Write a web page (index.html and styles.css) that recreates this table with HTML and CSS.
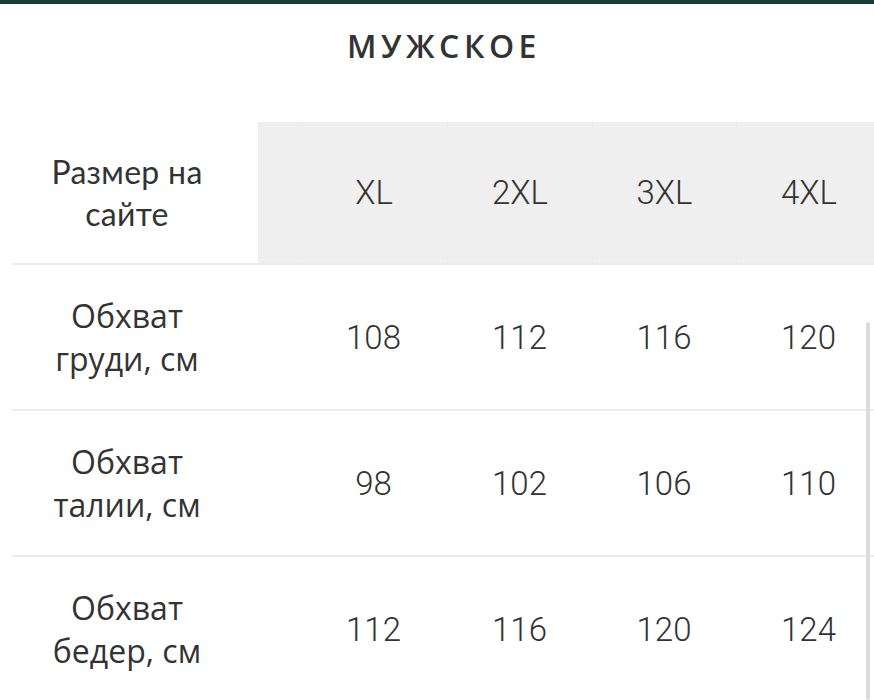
FILE: index.html
```html
<!DOCTYPE html>
<html lang="ru">
<head>
<meta charset="utf-8">
<title>Мужское</title>
<link rel="stylesheet" href="styles.css">
</head>
<body>
<div class="topbar"></div>
<h1 class="title">МУЖСКОЕ</h1>
<div class="table">
  <div class="row head">
    <div class="label">Размер на<br>сайте</div>
    <div class="spacer"></div>
    <div class="size">XL</div>
    <div class="size">2XL</div>
    <div class="size">3XL</div>
    <div class="size">4XL</div>
  </div>
  <div class="row">
    <div class="label">Обхват<br>груди, см</div>
    <div class="spacer"></div>
    <div class="num">108</div>
    <div class="num">112</div>
    <div class="num">116</div>
    <div class="num">120</div>
  </div>
  <div class="row">
    <div class="label">Обхват<br>талии, см</div>
    <div class="spacer"></div>
    <div class="num">98</div>
    <div class="num">102</div>
    <div class="num">106</div>
    <div class="num">110</div>
  </div>
  <div class="row">
    <div class="label">Обхват<br>бедер, см</div>
    <div class="spacer"></div>
    <div class="num">112</div>
    <div class="num">116</div>
    <div class="num">120</div>
    <div class="num">124</div>
  </div>
</div>
<div class="scrollbar"></div>
</body>
</html>
```

FILE: styles.css
```css
html, body {
  margin: 0;
  padding: 0;
  background: #ffffff;
}
body {
  width: 874px;
  height: 700px;
  overflow: hidden;
  position: relative;
  font-family: "Open Sans", "Liberation Sans", sans-serif;
  color: #333;
}
.topbar {
  height: 4px;
  background: #1c3a3a;
}
.title {
  margin: 0;
  height: 118px;
  padding-top: 21px;
  padding-left: 14px;
  box-sizing: border-box;
  text-align: center;
  font-family: "Open Sans", sans-serif;
  font-weight: 600;
  font-size: 32px;
  line-height: 42px;
  letter-spacing: 4.5px;
  color: #333;
}
.table {
  margin-left: 12px;
  width: 862px;
  overflow: hidden;
}
.row {
  display: grid;
  grid-template-columns: 246px 42px 147px 145px 144px 145px;
  height: 144px;
  border-bottom: 2px solid #ececec;
  width: 880px;
}
.row.head {
  height: 141px;
}
.label {
  display: flex;
  align-items: center;
  justify-content: center;
  text-align: center;
  padding-right: 16px;
  font-size: 32px;
  line-height: 43px;
  color: #333;
  background: #fff;
}
.head .label {
  font-family: "Lato", sans-serif;
  font-size: 32px;
  line-height: 42px;
  letter-spacing: 0.3px;
}
.head .spacer,
.head .size {
  background: #efefef;
}
.head .size {
  border-left: 1px solid #ebebeb;
}
.size,
.num {
  display: flex;
  align-items: center;
  justify-content: center;
  font-family: "Roboto", sans-serif;
  font-weight: 300;
  font-size: 33px;
  color: #333;
}
.scrollbar {
  position: absolute;
  left: 866px;
  top: 322px;
  width: 4px;
  height: 378px;
  border-radius: 2px;
  background: #dcdcdc;
}
```
